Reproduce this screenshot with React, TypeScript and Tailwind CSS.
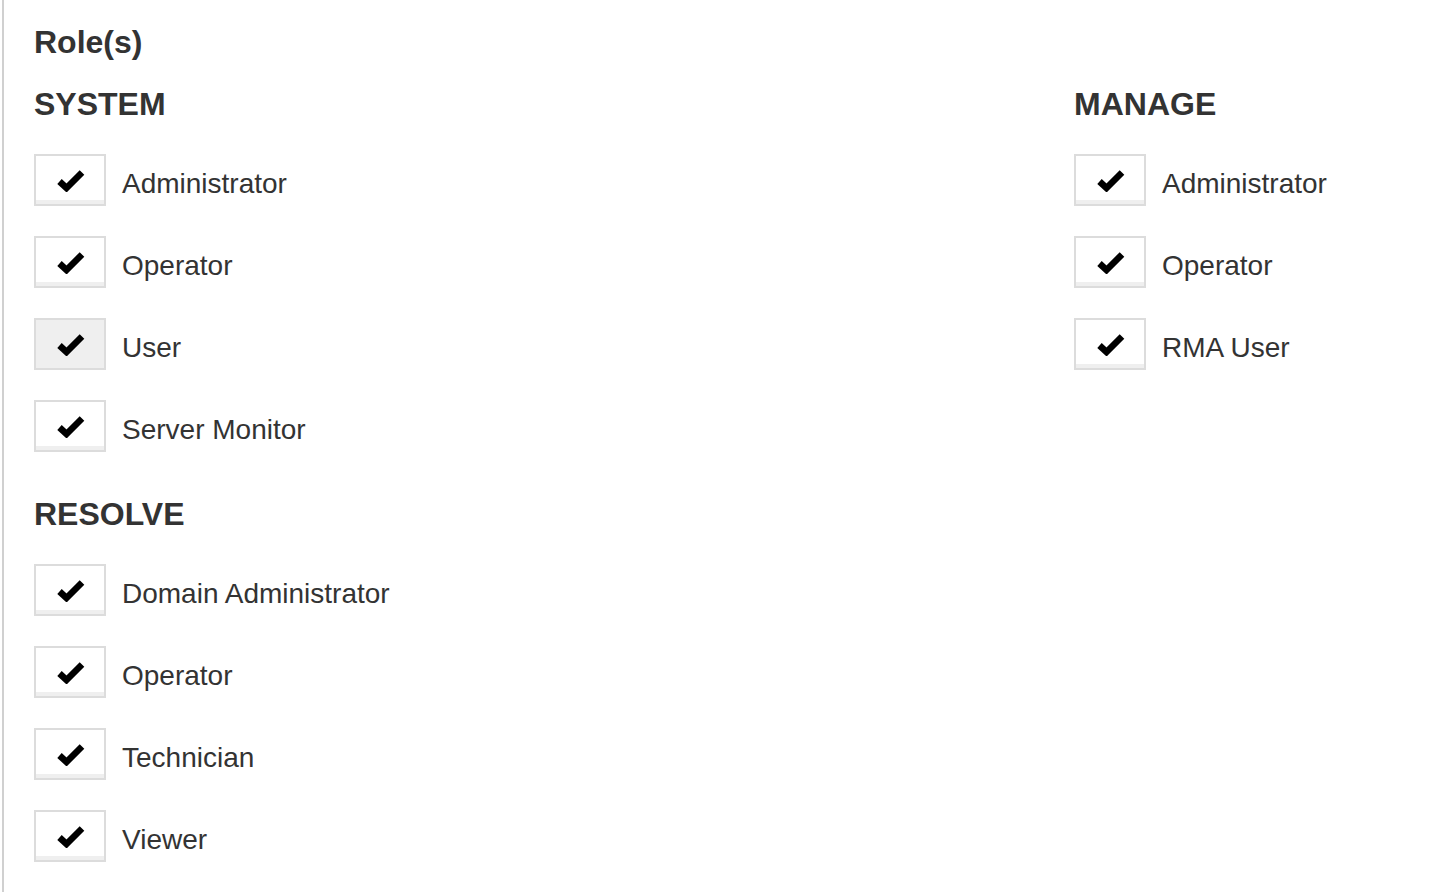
import React from "react";

const sections = {
  system: ["Administrator", "Operator", "User", "Server Monitor"],
  resolve: ["Domain Administrator", "Operator", "Technician", "Viewer"],
  manage: ["Administrator", "Operator", "RMA User"],
};

function CheckMark() {
  return (
    <svg width="28" height="24" viewBox="0 0 28 24" className="block">
      <polyline
        points="2.5,13.5 9.5,20 25,4.5"
        fill="none"
        stroke="#000"
        strokeWidth="6.5"
        strokeLinejoin="miter"
        strokeLinecap="butt"
      />
    </svg>
  );
}

function RoleCheckbox({ label, active }: { label: string; active?: boolean }) {
  return (
    <label className="flex items-start h-[52px] cursor-pointer">
      <span
        className={
          active
            ? "flex items-center justify-center w-[72px] h-[52px] border-2 border-[#dcdcdc] bg-[#efefef]"
            : "flex items-center justify-center w-[72px] h-[52px] border-2 border-[#dcdcdc] bg-white shadow-[inset_0_-4px_0_#efefef]"
        }
      >
        <span className="pb-[1px] pl-[1px]">
          <CheckMark />
        </span>
      </span>
      <span className="ml-4 pt-[4px] text-[28px] leading-[52px] text-[#333]">{label}</span>
    </label>
  );
}

function Section({ title, items, className }: { title: string; items: string[]; className?: string }) {
  return (
    <div className={className}>
      <h3 className="text-[32px] leading-[32px] font-bold text-[#333]">{title}</h3>
      <div className="mt-[34px] flex flex-col gap-[30px]">
        {items.map((item) => (
          <RoleCheckbox key={item} label={item} active={title === "SYSTEM" && item === "User"} />
        ))}
      </div>
    </div>
  );
}

export default function App() {
  return (
    <div
      className="min-h-screen bg-white ml-[2px] border-l-2 border-[#d0d0d0] pl-[30px] pt-[26px]"
      style={{ fontFamily: '"Liberation Sans", Arial, sans-serif' }}
    >
      <h2 className="text-[32px] leading-[32px] font-bold text-[#333]">Role(s)</h2>

      <div className="mt-[30px] grid grid-cols-[1040px_1fr]">
        <div>
          <Section title="SYSTEM" items={sections.system} />
          <Section title="RESOLVE" items={sections.resolve} className="mt-[46px]" />
        </div>
        <Section title="MANAGE" items={sections.manage} />
      </div>
    </div>
  );
}
